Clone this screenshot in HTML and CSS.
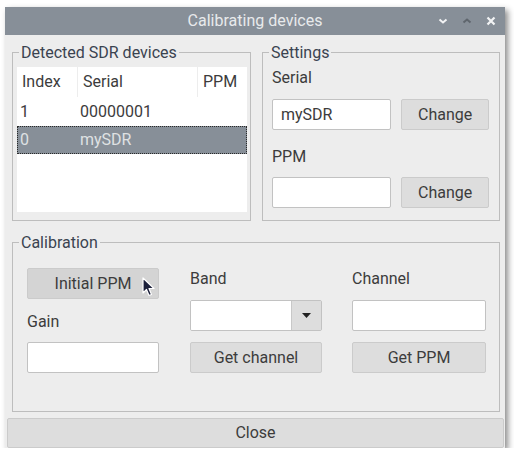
FILE: index.html
```html
<!DOCTYPE html>
<html>
<head>
<meta charset="utf-8">
<link rel="stylesheet" href="styles.css">
</head>
<body>
<div class="window">
  <div class="titlebar">
    <span class="title">Calibrating devices</span>
    <div class="wm-buttons">
      <svg class="wm" width="10" height="10" viewBox="0 0 10 10"><path d="M1.5 3.5 L5 6.5 L8.5 3.5" fill="none" stroke="#f2f3f4" stroke-width="2"/></svg>
      <svg class="wm" width="10" height="10" viewBox="0 0 10 10"><path d="M1.5 6.5 L5 3.5 L8.5 6.5" fill="none" stroke="#5f666d" stroke-width="2"/></svg>
      <svg class="wm" width="10" height="10" viewBox="0 0 10 10"><path d="M1.5 1.5 L8.5 8.5 M8.5 1.5 L1.5 8.5" fill="none" stroke="#f2f3f4" stroke-width="2.2"/></svg>
    </div>
  </div>
  <div class="content">
    <div class="top-row">
      <div class="group devices">
        <span class="legend">Detected SDR devices</span>
        <div class="table">
          <div class="row header">
            <div class="cell c1">Index</div>
            <div class="cell c2">Serial</div>
            <div class="cell c3">PPM</div>
          </div>
          <div class="row">
            <div class="cell c1">1</div>
            <div class="cell c2">00000001</div>
            <div class="cell c3"></div>
          </div>
          <div class="row selected">
            <div class="cell c1">0</div>
            <div class="cell c2">mySDR</div>
            <div class="cell c3"></div>
          </div>
        </div>
      </div>
      <div class="group settings">
        <span class="legend">Settings</span>
        <div class="label l-serial">Serial</div>
        <div class="field-row">
          <div class="input">mySDR</div>
          <div class="button">Change</div>
        </div>
        <div class="label l-ppm">PPM</div>
        <div class="field-row r2">
          <div class="input"></div>
          <div class="button">Change</div>
        </div>
      </div>
    </div>
    <div class="group calibration">
      <span class="legend">Calibration</span>
      <div class="cal-grid">
        <div class="col col1">
          <div class="button hover">Initial PPM
            <svg class="cursor" width="14" height="21" viewBox="0 0 14 21"><path d="M1 1 L1 16 L4.5 12.5 L7 18.5 L9.5 17.5 L7 11.5 L12 11.5 Z" fill="#1b1f3a" stroke="#ffffff" stroke-width="1.2" stroke-linejoin="round"/></svg>
          </div>
          <div class="label l-gain">Gain</div>
          <div class="input"></div>
        </div>
        <div class="col col2">
          <div class="label">Band</div>
          <div class="combo">
            <div class="combo-field"></div>
            <div class="combo-arrow"><svg width="9" height="5" viewBox="0 0 9 5"><path d="M0 0 L9 0 L4.5 5 Z" fill="#222"/></svg></div>
          </div>
          <div class="button mt">Get channel</div>
        </div>
        <div class="col col3">
          <div class="label">Channel</div>
          <div class="input">&nbsp;</div>
          <div class="button mt">Get PPM</div>
        </div>
      </div>
    </div>
    <div class="close button">Close</div>
  </div>
</div>
</body>
</html>
```

FILE: styles.css
```css
html, body {
  margin: 0;
  background: #ffffff;
}
body {
  padding: 7px 0 0 5px;
  font-family: Roboto, "Liberation Sans", sans-serif;
  font-size: 16px;
  color: #3c3c3c;
}
.window {
  width: 500px;
  height: 441px;
  background: #ededed;
  box-shadow: 3px 3px 6px rgba(0, 0, 0, 0.45);
  display: flex;
  flex-direction: column;
  box-sizing: border-box;
}
.titlebar {
  height: 28px;
  background: #878f98;
  position: relative;
  display: flex;
  align-items: center;
  justify-content: center;
  flex: none;
}
.title {
  color: #e8eaec;
  font-size: 16px;
  line-height: 28px;
}
.wm-buttons {
  position: absolute;
  right: 9px;
  top: 9px;
  display: flex;
  gap: 14px;
}
.wm { display: block; }
.content {
  padding: 17px 5px 0 7px;
  display: flex;
  flex-direction: column;
  flex: 1;
}
.top-row {
  display: grid;
  grid-template-columns: 239px 238px;
  column-gap: 11px;
}
.group {
  position: relative;
  border: 1px solid #bdbdbd;
  box-sizing: border-box;
}
.legend {
  position: absolute;
  top: -10px;
  left: 6px;
  padding: 0 2px;
  background: #ededed;
  line-height: 19px;
  color: #3a4350;
}
.devices {
  height: 169px;
  padding: 14px 3px 8px 4px;
}
.table {
  background: #ffffff;
  height: 145px;
}
.row {
  display: flex;
  height: 30px;
  line-height: 30px;
}
.row.header { height: 30px; }
.row + .row { height: 29px; line-height: 29px; }
.cell {
  box-sizing: border-box;
}
.c1 { width: 60px; padding-left: 3px; }
.c2 { width: 120px; padding-left: 3px; }
.c3 { flex: 1; }
.header .c1 { padding-left: 5px; }
.header .cell + .cell { border-left: 1px solid #ededed; }
.header .c2 { padding-left: 5px; }
.header .c3 { padding-left: 5px; }
.row.selected {
  background: #878f98;
  color: #dfe1e3;
  outline: 1px dotted #2a2a2a;
  outline-offset: -1px;
  height: 28px;
  line-height: 28px;
}
.settings {
  height: 169px;
  padding: 0 10px 0 9px;
}
.label {
  line-height: 20px;
  height: 20px;
}
.l-serial { margin-top: 15px; }
.l-ppm { margin-top: 17px; }
.field-row {
  display: flex;
  gap: 10px;
  margin-top: 11px;
}
.field-row.r2 { margin-top: 10px; }
.input {
  box-sizing: border-box;
  height: 31px;
  background: #ffffff;
  border: 1px solid #c2c2c2;
  border-radius: 2px;
  line-height: 29px;
  padding-left: 8px;
}
.field-row .input { width: 120px; }
.button {
  box-sizing: border-box;
  height: 31px;
  background: #dddddd;
  border: 1px solid #cbcbcb;
  border-radius: 2px;
  text-align: center;
  line-height: 29px;
  position: relative;
}
.field-row .button { width: 88px; }
.button.hover { background: #d4d4d4; }
.cursor {
  position: absolute;
  left: 114px;
  top: 8px;
}
.calibration {
  margin-top: 21px;
  height: 170px;
  padding: 0 15px 0 14px;
}
.cal-grid {
  display: grid;
  grid-template-columns: 132px 132px 133px;
  column-gap: 31px;
}
.col3 { margin-left: -1px; }
.col1 { padding-top: 25px; }
.col2, .col3 { padding-top: 26px; }
.l-gain { margin-top: 13px; margin-bottom: 10px; }
.col2 .label, .col3 .label { margin-bottom: 11px; }
.button.mt { margin-top: 11px; }
.combo {
  display: flex;
  height: 31px;
  box-sizing: border-box;
  border: 1px solid #c2c2c2;
  border-radius: 2px;
  overflow: hidden;
}
.combo-field {
  flex: 1;
  background: #ffffff;
}
.combo-arrow {
  width: 29px;
  background: #dddddd;
  border-left: 1px solid #c8c8c8;
  display: flex;
  align-items: center;
  justify-content: center;
}
.combo-arrow svg { display: block; }
.close {
  margin: 6px -4px 0 -5px;
  height: 30px;
  line-height: 28px;
}
```
